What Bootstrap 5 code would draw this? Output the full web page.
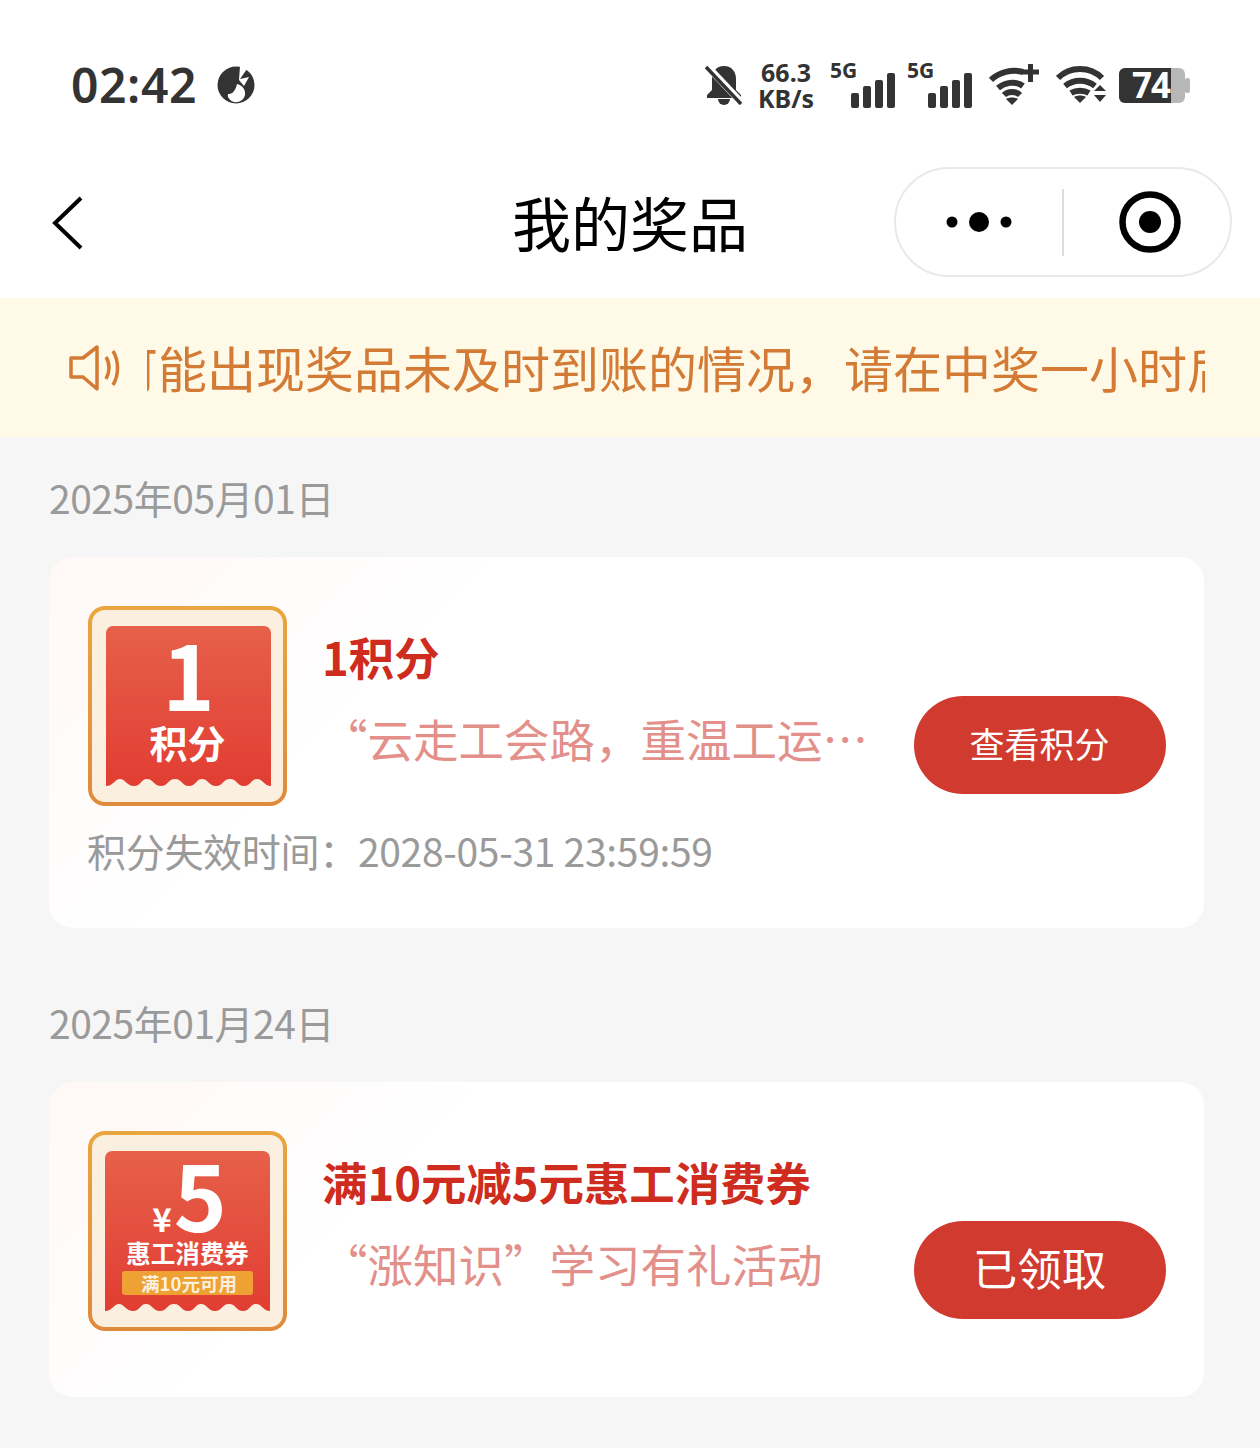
<!DOCTYPE html>
<html lang="zh-CN">
<head>
<meta charset="utf-8">
<title>我的奖品</title>
<link rel="stylesheet" href="https://cdn.jsdelivr.net/npm/bootstrap@5.3.0/dist/css/bootstrap.min.css">
<style>
html,body{margin:0;background:#f6f6f6}
body{width:1260px;height:1448px;overflow:hidden;font-family:"Noto Sans CJK SC","Noto Sans",sans-serif}
.stat-bar{height:150px;background:#fff;padding:20px 70px 0 71px;color:#333}
.stat-time{font-family:"Noto Sans",sans-serif;font-weight:600;font-size:48px;line-height:1;letter-spacing:.6px}
.stat-logo{margin-left:19px}
.stat-speed{font-family:"Noto Sans",sans-serif;font-weight:700;font-size:25px;line-height:26px;text-align:center;width:58px;margin:0 15px 0 14px}
.sig{position:relative;width:65px;height:46px;margin-right:12px}
.sig-last{margin-right:17px}
.sig-label{position:absolute;left:0;top:-5px;font:700 21px/26px "Noto Sans",sans-serif}
.sig svg{position:absolute;right:0;bottom:0}
.wifi-a{margin-right:15px}
.wifi-b{margin-right:12px}
.batt{position:relative;width:72px;height:37px}
.batt-num{position:absolute;left:14px;top:0;font:700 35px/36px "Noto Sans",sans-serif;color:#fff;letter-spacing:-1px}
.top-nav{height:148px;background:#fff;padding:0 28px 0 50px}
.back-ico{margin-top:-2px}
.nav-title{font-size:59px;line-height:1;color:#000;margin:-5px 0 0 426px;font-weight:400}
.capsule{width:338px;height:110px;border:2px solid #e9e9e9;border-radius:55px;margin:-4px 0 0 auto}
.capsule-sep{width:2px;height:67px;background:#dcdcdc}
.capsule-cell{width:167px}
.capsule-rec{padding-left:6px}
.notice{height:139px;background:#fffae8;padding:0 55px 0 69px;color:#d37a34}
.notice-clip{overflow:hidden;white-space:nowrap;margin-left:26px;flex:1;font-size:49px;line-height:1;height:60px;padding-top:4px}
.notice-clip span{display:inline-block;margin-left:-38px}
.day-label{font-size:39px;line-height:1;color:#9a9a9a;margin:0 0 0 49px;height:39px;letter-spacing:-.47px}
.day-one{margin-top:41px}
.day-two{margin-top:75px}
.prize{width:1155px;margin:40px 0 0 49px;border-radius:24px;background:linear-gradient(135deg,#fff8f6 0,#fff 30%);padding:49px 38px 0 39px}
.prize-one{height:371px}
.prize-two{height:315px}
.tag{position:relative;width:199px;height:200px;flex:none;border-radius:17px;padding:4px;background:linear-gradient(180deg,#eaa63e,#e08a3c)}
.tag-face{position:relative;height:100%;border-radius:13px;background:#fbefdf;padding:16px 12px 0 14px}
.tag-face-alt{padding:16px 13px 0 13px}
.tag-red{position:relative;height:161px;border-radius:7px 7px 0 0;background:linear-gradient(180deg,#e6604a,#e23d32);color:#fff;text-align:center;font-weight:700}
.tag-red svg{position:absolute;left:0;bottom:0;display:block}
.tag-big{font-size:89px;line-height:89px;padding-top:2px;height:93px}
.tag-word{font-size:38px;line-height:46px;padding-right:2px}
.tag-five{display:flex;justify-content:center;align-items:baseline;height:87px;font-size:90px;line-height:84px;padding-left:4px}
.tag-five small{font-size:33px;margin-right:2px;font-weight:700}
.tag-name{font-size:24.5px;line-height:30px;white-space:nowrap}
.tag-cond{width:131px;height:24px;margin:3px 0 0 17px;padding-left:3px;border-radius:3px;background:#eda233;color:#fbefdf;font-size:18.5px;line-height:24px;white-space:nowrap}
.prize-main{margin-left:35px;min-width:0}
.prize-name{height:90px;padding-top:22px;font-size:45.4px;line-height:56px;font-weight:700;color:#cf2c20;white-space:nowrap}
.prize-desc{width:553px;font-size:45.5px;line-height:60px;color:#e38f8a;white-space:nowrap;overflow:hidden;text-overflow:ellipsis;margin-top:-14px}
.prize-btn{width:252px;height:98px;background:#d03a2f;border:0;border-radius:49px;color:#fff;padding:0 1px 6px 0;line-height:1}
.prize-btn:hover{background:#d03a2f;color:#fff}
.btn-sm-txt{font-size:35px}
.btn-lg-txt{font-size:44.5px}
.expire{font-size:39px;line-height:1;color:#9a9a9a;margin:25px 0 0 -1px;letter-spacing:-.3px}
</style>
</head>
<body>
<div class="stat-bar d-flex align-items-center">
  <span class="stat-time">02:42</span>
  <svg class="stat-logo" width="40" height="40" viewBox="0 0 40 40"><circle cx="20" cy="20" r="18.5" fill="#333"/><path d="M24 1 L31 4 L24 14 L33 12 L28 21 L23 15z" fill="#fff"/><path d="M21 19c5 1 9 6 8 11-1 5-6 8-11 7-4-1-7-5-6-8 3 0 7-1 9-10z" fill="#fff"/></svg>
  <div class="ms-auto d-flex align-items-center">
    <svg width="38" height="40" viewBox="0 0 38 40"><path d="M19 1c-8 0-12 6-12 13v11l-5 5v3h34v-3l-5-5V14C31 7 27 1 19 1z" fill="#333"/><path d="M13 34a6 6 0 0 0 12 0z" fill="#333"/><path d="M1 0l35 37" stroke="#fff" stroke-width="7"/><path d="M1 2l35 37" stroke="#333" stroke-width="3.5"/></svg>
    <div class="stat-speed">66.3<br>KB/s</div>
    <div class="sig"><span class="sig-label">5G</span><svg width="45" height="35" viewBox="0 0 45 35" fill="#333"><rect x="1" y="20" width="8" height="15" rx="2"/><rect x="13" y="13" width="8" height="22" rx="2"/><rect x="25" y="7" width="8" height="28" rx="2"/><rect x="37" y="0" width="8" height="35" rx="2"/></svg></div>
    <div class="sig sig-last"><span class="sig-label">5G</span><svg width="45" height="35" viewBox="0 0 45 35" fill="#333"><rect x="1" y="20" width="8" height="15" rx="2"/><rect x="13" y="13" width="8" height="22" rx="2"/><rect x="25" y="7" width="8" height="28" rx="2"/><rect x="37" y="0" width="8" height="35" rx="2"/></svg></div>
    <svg class="wifi-a" width="52" height="42" viewBox="0 0 52 42"><g fill="none" stroke="#333" stroke-width="6"><path d="M2 16C10 8 23 5 34 8"/><path d="M9 24c6-5 17-8 25-2"/><path d="M15 31c4-4 12-4 16 0"/></g><path d="M23 41l-6-6c3-2 9-2 12 0z" fill="#333"/><path d="M33 8h17M41.500 0v18" stroke="#333" stroke-width="5"/></svg>
    <svg class="wifi-b" width="50" height="40" viewBox="0 0 50 40"><g fill="none" stroke="#333" stroke-width="6"><path d="M2 13C14 1 34 1 46 13"/><path d="M9 21c9-7 21-7 30 0"/><path d="M15 28c5-3 13-3 18 0"/></g><path d="M24 38l-6-6c3-2 9-2 12 0z" fill="#333"/><path d="M38 26l6-6 6 6zM38 30l6 7 6-7z" fill="#333"/></svg>
    <div class="batt"><svg width="72" height="37" viewBox="0 0 72 37"><rect x="1" y="1" width="66" height="35" rx="6" fill="#b7b7b7"/><rect x="67" y="11" width="5" height="15" rx="2" fill="#b7b7b7"/><path d="M7 1h46v35H7a6 6 0 0 1-6-6V7a6 6 0 0 1 6-6z" fill="#333"/></svg><span class="batt-num">74</span></div>
  </div>
</div>
<div class="top-nav d-flex align-items-center">
  <svg class="back-ico d-block" width="36" height="58" viewBox="0 0 36 58"><path d="M31 4L5 29l26 25" fill="none" stroke="#000" stroke-width="4"/></svg>
  <div class="nav-title">我的奖品</div>
  <div class="capsule d-flex align-items-center">
    <div class="capsule-cell d-flex justify-content-center"><svg width="66" height="24" viewBox="0 0 66 24"><circle cx="6" cy="12" r="5.500"/><circle cx="33" cy="12" r="10"/><circle cx="60" cy="12" r="5.500"/></svg></div>
    <div class="capsule-sep"></div>
    <div class="capsule-cell capsule-rec d-flex justify-content-center"><svg width="62" height="62" viewBox="0 0 62 62"><circle cx="31" cy="31" r="27.500" fill="none" stroke="#000" stroke-width="6.500"/><circle cx="31" cy="31" r="11"/></svg></div>
  </div>
</div>
<div class="notice d-flex align-items-center">
  <svg width="52" height="46" viewBox="0 0 52 46"><g fill="none" stroke="#d37a34" stroke-width="3.500" stroke-linejoin="round"><path d="M2 13h12L28 2v42L14 32H2z"/><path d="M37 12c4 6 4 15 0 22"/><path d="M44 6c6 10 6 24 0 34"/></g></svg>
  <div class="notice-clip"><span>可能出现奖品未及时到账的情况，请在中奖一小时后</span></div>
</div>

<div class="day-label day-one">2025年05月01日</div>
<div class="card border-0 prize prize-one">
  <div class="d-flex">
    <div class="tag"><div class="tag-face"><div class="tag-red">
      <div class="tag-big">1</div><div class="tag-word">积分</div>
      <svg width="165" height="10" viewBox="0 0 165 10"><path d="M0 10V9C7 9 9 2 14 2S21 9 28 9 35 2 41 2 48 9 55 9 62 2 69 2 76 9 83 9 90 2 96 2 103 9 110 9 117 2 124 2 131 9 138 9 145 2 151 2 158 9 165 9V10z" fill="#fbefdf"/></svg>
    </div></div></div>
    <div class="prize-main flex-grow-1">
      <div class="prize-name">1积分</div>
      <div class="d-flex align-items-center justify-content-between">
        <div class="prize-desc">“云走工会路，重温工运路”活动奖品</div>
        <button type="button" class="btn prize-btn btn-sm-txt">查看积分</button>
      </div>
    </div>
  </div>
  <div class="expire">积分失效时间：2028-05-31 23:59:59</div>
</div>

<div class="day-label day-two">2025年01月24日</div>
<div class="card border-0 prize prize-two">
  <div class="d-flex">
    <div class="tag"><div class="tag-face tag-face-alt"><div class="tag-red">
      <div class="tag-five"><small>¥</small>5</div>
      <div class="tag-name">惠工消费券</div>
      <div class="tag-cond">满10元可用</div>
      <svg width="165" height="10" viewBox="0 0 165 10"><path d="M0 10V9C7 9 9 2 14 2S21 9 28 9 35 2 41 2 48 9 55 9 62 2 69 2 76 9 83 9 90 2 96 2 103 9 110 9 117 2 124 2 131 9 138 9 145 2 151 2 158 9 165 9V10z" fill="#fbefdf"/></svg>
    </div></div></div>
    <div class="prize-main flex-grow-1">
      <div class="prize-name">满10元减5元惠工消费券</div>
      <div class="d-flex align-items-center justify-content-between">
        <div class="prize-desc">“涨知识”学习有礼活动</div>
        <button type="button" class="btn prize-btn btn-lg-txt">已领取</button>
      </div>
    </div>
  </div>
</div>
<script src="https://cdn.jsdelivr.net/npm/bootstrap@5.3.0/dist/js/bootstrap.bundle.min.js"></script>
</body>
</html>
